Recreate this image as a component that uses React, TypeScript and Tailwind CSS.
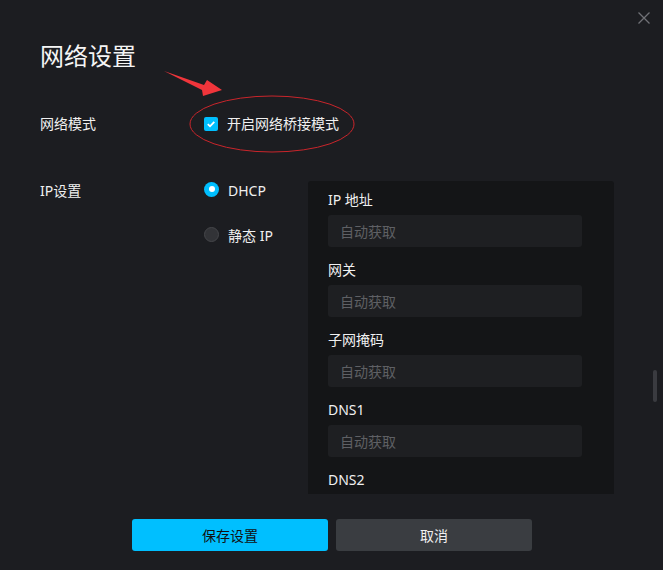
import React, { useState } from 'react';

const font = { fontFamily: '"Noto Sans", "Noto Sans CJK SC", sans-serif' };

function Field({ label }: { label: string }) {
  return (
    <div className="mb-[13px]">
      <div className="h-5 text-[14px] leading-5 text-[#f0f0f0]">{label}</div>
      <input
        type="text"
        readOnly
        placeholder="自动获取"
        className="mt-[5px] h-8 w-[254px] rounded-[3px] bg-[#1e1f22] px-3 text-[14px] text-[#ddd] placeholder:text-[#5f6064] focus:outline-none"
      />
    </div>
  );
}

function Radio({ checked, label, onClick }: { checked: boolean; label: string; onClick: () => void }) {
  return (
    <button onClick={onClick} className="flex h-5 items-center gap-[9px] text-left">
      <span
        className={
          checked
            ? 'relative -mt-1 flex h-[15px] w-[15px] items-center justify-center rounded-full bg-[#00bfff]'
            : 'relative -mt-1 h-[15px] w-[15px] rounded-full border border-[#45464a] bg-[#323337]'
        }
      >
        {checked && <span className="h-[6px] w-[6px] rounded-full bg-white" />}
      </span>
      <span className="text-[14px] leading-5 text-[#f0f0f0]">{label}</span>
    </button>
  );
}

export default function App() {
  const [bridge, setBridge] = useState(true);
  const [mode, setMode] = useState<'dhcp' | 'static'>('dhcp');

  return (
    <div className="relative h-[570px] w-[663px] overflow-hidden bg-[#1c1d21]" style={font}>
      {/* 关闭按钮 */}
      <button className="absolute right-[13px] top-[12px] h-3 w-3">
        <svg viewBox="0 0 12 12" className="h-3 w-3" fill="none" stroke="#707176" strokeWidth="1.3">
          <path d="M0.5 0.5 L11.5 11.5 M11.5 0.5 L0.5 11.5" />
        </svg>
      </button>

      {/* 滚动条 */}
      <div className="absolute right-[6px] top-[370px] h-8 w-1 rounded-full bg-[#3a3b40]" />

      {/* 红色标注 */}
      <svg className="pointer-events-none absolute left-0 top-0" width="663" height="570">
        <path d="M164 71 L204 85 L207 80 L222 90 L203 96 L202 90 Z" fill="#f0353b" />
        <ellipse cx="272" cy="124" rx="82" ry="28" fill="none" stroke="#c9252b" strokeWidth="1" />
      </svg>

      <div className="px-10 pt-10">
        <h1 className="h-8 text-[24px] leading-8 text-[#f5f5f5]">网络设置</h1>

        <div className="mt-[42px] flex h-5 items-center">
          <div className="w-[164px] text-[14px] leading-5 text-[#f0f0f0]">网络模式</div>
          <button onClick={() => setBridge(!bridge)} className="flex items-center gap-[9px]">
            <span
              className={
                bridge
                  ? 'flex h-[14px] w-[14px] items-center justify-center rounded-[2px] bg-[#00bfff]'
                  : 'h-[14px] w-[14px] rounded-[2px] border border-[#55565a]'
              }
            >
              {bridge && (
                <svg viewBox="0 0 10 10" className="h-[10px] w-[10px]" fill="none" stroke="white" strokeWidth="1.8">
                  <path d="M1.8 5.2 L4 7.3 L8.3 2.8" />
                </svg>
              )}
            </span>
            <span className="text-[14px] leading-5 text-[#f0f0f0]">开启网络桥接模式</span>
          </button>
        </div>

        <div className="mt-[47px] flex items-start">
          <div className="w-[164px] text-[14px] leading-5 text-[#f0f0f0]">IP设置</div>
          <div className="flex w-[104px] flex-col gap-[25px]">
            <Radio checked={mode === 'dhcp'} label="DHCP" onClick={() => setMode('dhcp')} />
            <Radio checked={mode === 'static'} label="静态 IP" onClick={() => setMode('static')} />
          </div>
          <div className="h-[313px] w-[306px] overflow-hidden rounded-t-[3px] bg-[#141517] px-5 pt-[9px]">
            <Field label="IP 地址" />
            <Field label="网关" />
            <Field label="子网掩码" />
            <Field label="DNS1" />
            <Field label="DNS2" />
          </div>
        </div>

        <div className="mt-[25px] flex gap-2 pl-[92px]">
          <button className="h-8 w-[196px] rounded-[3px] bg-[#00bfff] text-[14px] text-[#111]">保存设置</button>
          <button className="h-8 w-[196px] rounded-[3px] bg-[#3a3d41] text-[14px] text-[#f0f0f0]">取消</button>
        </div>
      </div>
    </div>
  );
}
